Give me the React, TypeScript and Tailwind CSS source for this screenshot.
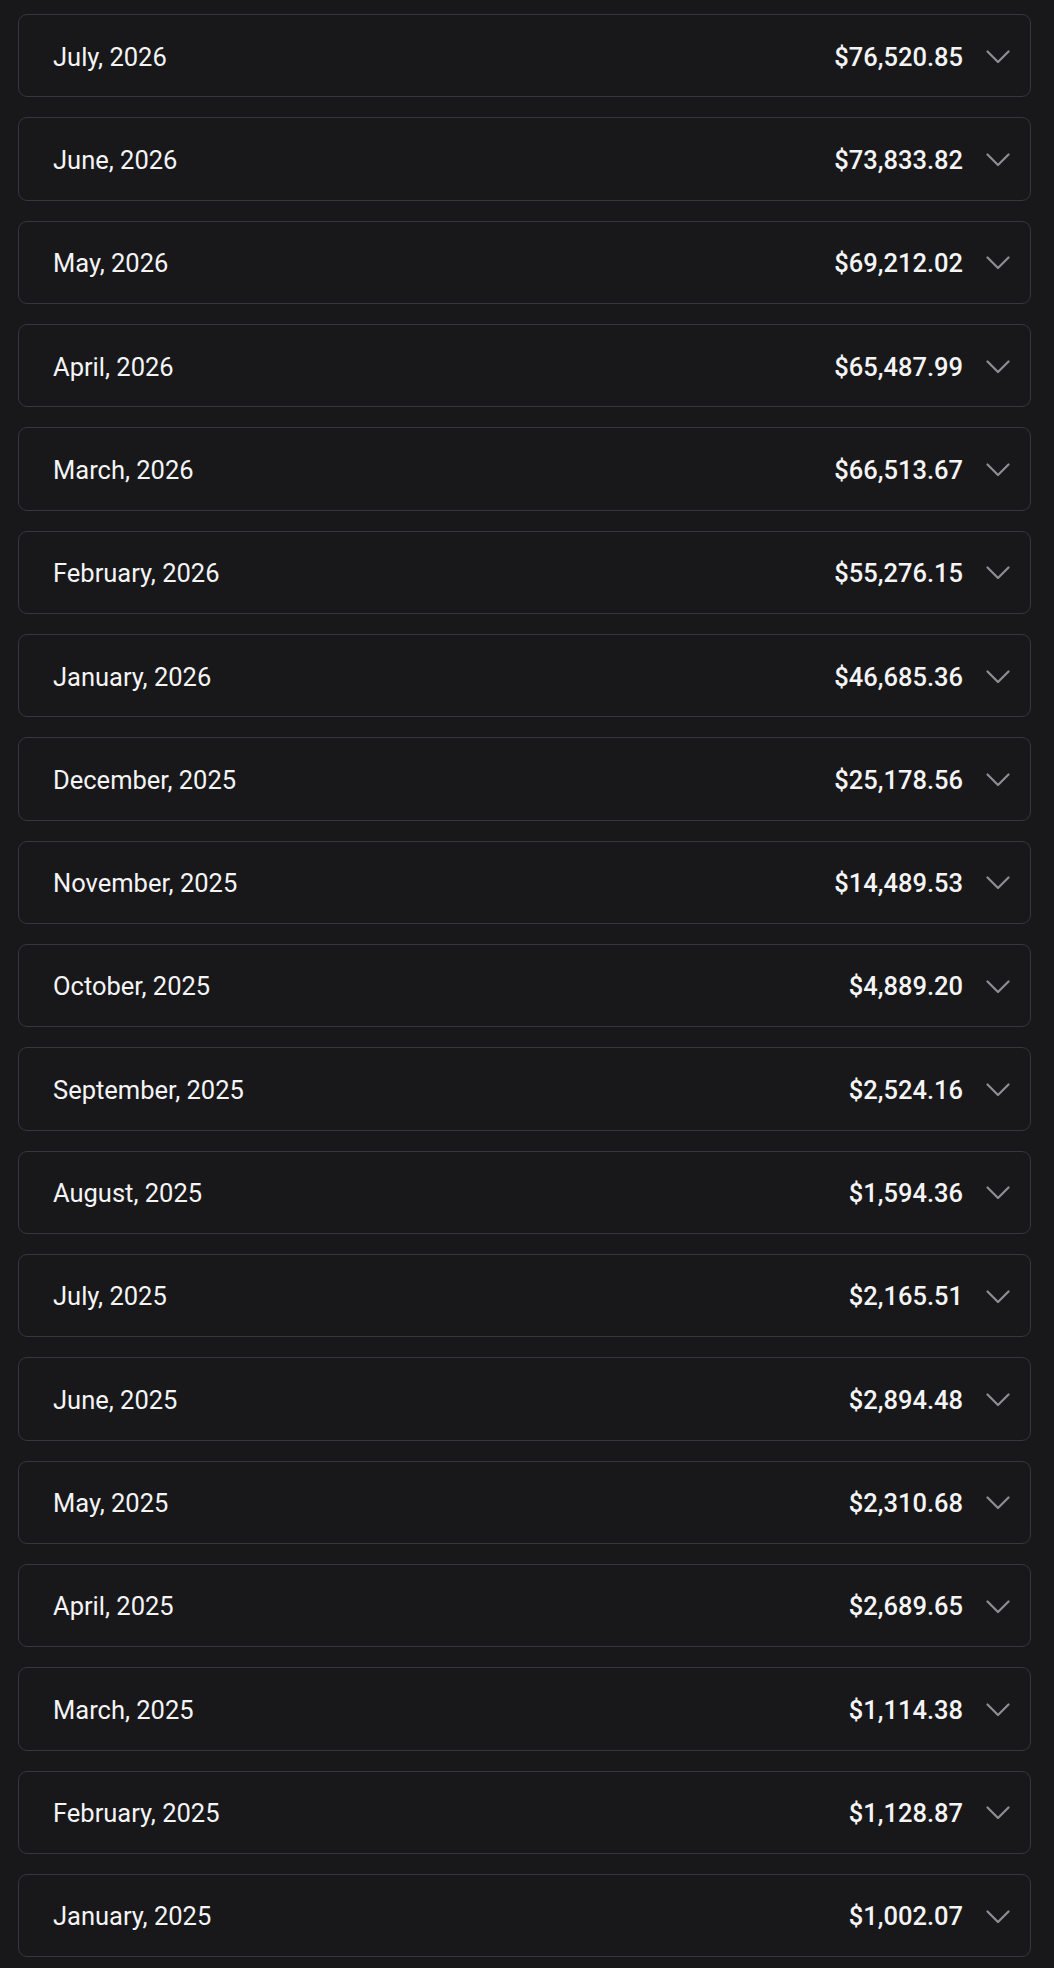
import React from 'react'

type Month = {
    label: string
    total: string
}

const months: Month[] = [
    { label: 'July, 2026', total: '$76,520.85' },
    { label: 'June, 2026', total: '$73,833.82' },
    { label: 'May, 2026', total: '$69,212.02' },
    { label: 'April, 2026', total: '$65,487.99' },
    { label: 'March, 2026', total: '$66,513.67' },
    { label: 'February, 2026', total: '$55,276.15' },
    { label: 'January, 2026', total: '$46,685.36' },
    { label: 'December, 2025', total: '$25,178.56' },
    { label: 'November, 2025', total: '$14,489.53' },
    { label: 'October, 2025', total: '$4,889.20' },
    { label: 'September, 2025', total: '$2,524.16' },
    { label: 'August, 2025', total: '$1,594.36' },
    { label: 'July, 2025', total: '$2,165.51' },
    { label: 'June, 2025', total: '$2,894.48' },
    { label: 'May, 2025', total: '$2,310.68' },
    { label: 'April, 2025', total: '$2,689.65' },
    { label: 'March, 2025', total: '$1,114.38' },
    { label: 'February, 2025', total: '$1,128.87' },
    { label: 'January, 2025', total: '$1,002.07' },
]

const Chevron: React.FC = () => (
    <svg
        width="24"
        height="14"
        viewBox="0 0 24 14"
        fill="none"
        stroke="currentColor"
        strokeWidth="2.2"
        strokeLinecap="round"
        strokeLinejoin="round"
        aria-hidden="true"
    >
        <polyline points="1.5 1.5 12 12 22.5 1.5" />
    </svg>
)

const MonthRow: React.FC<{ month: Month }> = ({ month }) => (
    <button
        type="button"
        className="flex h-[83.33px] w-full items-center justify-between rounded-[9px] border border-[#36363b] bg-[#18181b] pl-[34px] pr-[20px] pt-[2px] text-left"
    >
        <span className="text-[25.5px] font-normal text-[#f4f4f5]">{month.label}</span>
        <span className="flex items-center gap-[23px]">
            <span className="text-[25.5px] font-medium text-[#f4f4f5]">{month.total}</span>
            <span className="flex text-[#8d8d93]">
                <Chevron />
            </span>
        </span>
    </button>
)

export default function App() {
    return (
        <div
            className="min-h-screen bg-[#18181b] pt-[14px] pb-[10px] pl-[18px] pr-[23px]"
            style={{ fontFamily: 'Roboto, "Liberation Sans", sans-serif' }}
        >
            <div className="flex flex-col gap-[20px]">
                {months.map((m) => (
                    <MonthRow key={m.label} month={m} />
                ))}
            </div>
        </div>
    )
}
